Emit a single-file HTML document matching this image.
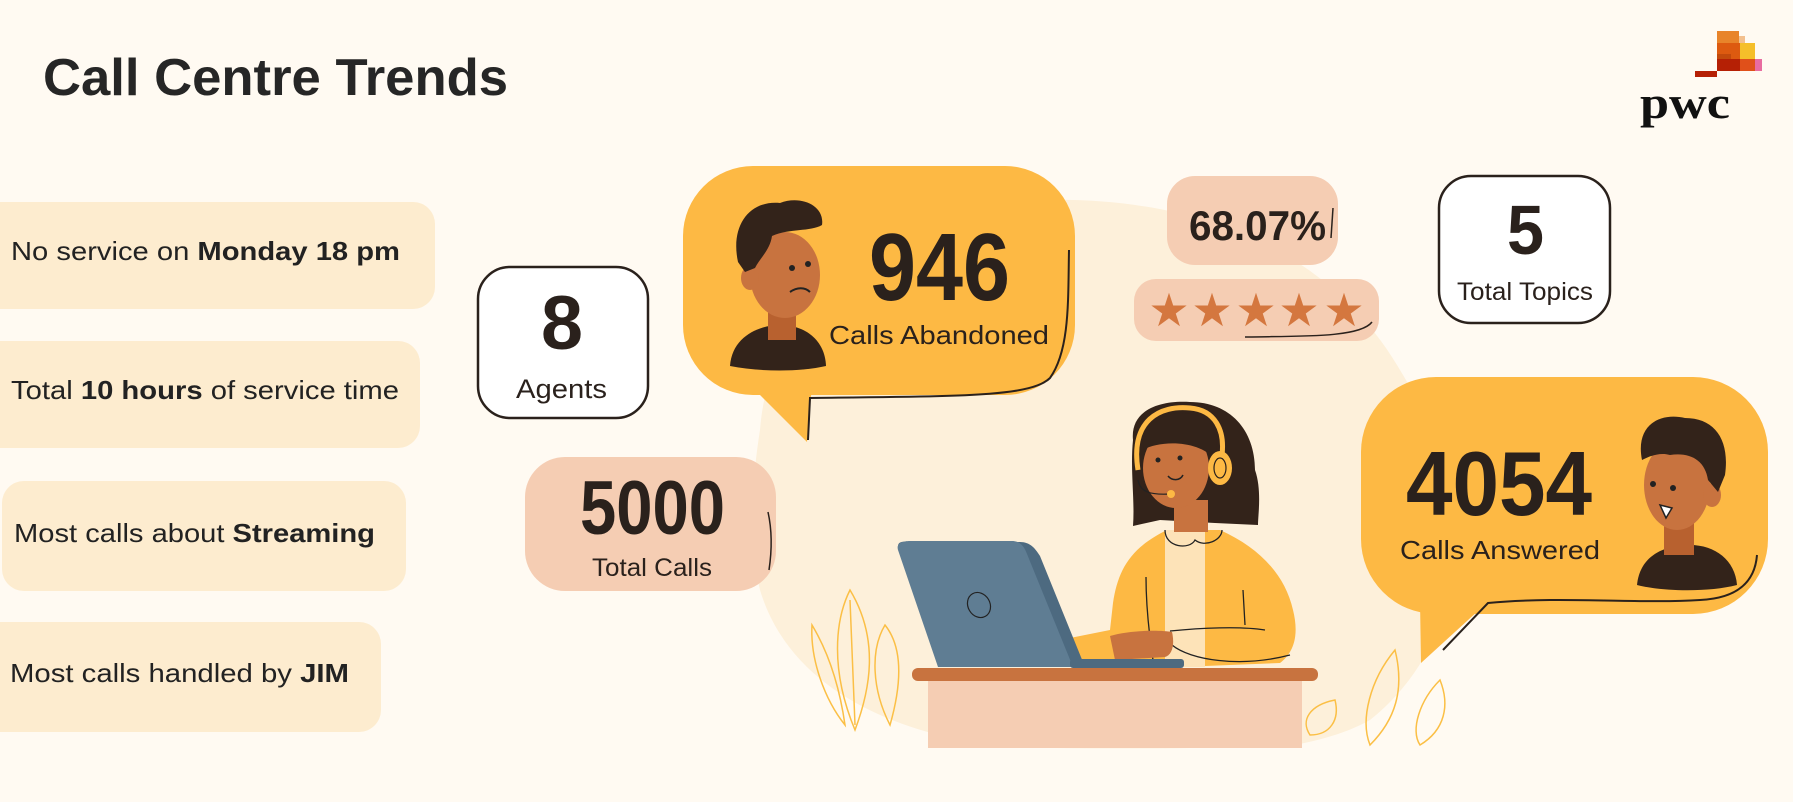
<!DOCTYPE html>
<html><head><meta charset="utf-8"><style>
html,body{margin:0;padding:0;background:#fffaf2;}
svg{display:block;font-family:"Liberation Sans",Arial,sans-serif;}
</style></head><body>
<svg width="1793" height="802" viewBox="0 0 1793 802" xmlns="http://www.w3.org/2000/svg">
<rect width="1793" height="802" fill="#fffaf2"/>
<text x="43" y="95" font-size="52" font-weight="bold" fill="#262626" textLength="465" lengthAdjust="spacingAndGlyphs">Call Centre Trends</text>
<rect x="1717" y="31" width="22" height="12" fill="#e8842a"/>
<rect x="1739" y="36" width="6" height="10" fill="#f3c08e"/>
<rect x="1717" y="43" width="28" height="16" fill="#dd5a10"/>
<rect x="1740" y="43" width="15" height="16" fill="#f5bf2a"/>
<rect x="1717" y="54" width="14" height="6" fill="#c34a0c"/>
<rect x="1717" y="59" width="25" height="12" fill="#b52005"/>
<rect x="1740" y="59" width="15" height="12" fill="#e0501a"/>
<rect x="1755" y="59" width="7" height="12" fill="#e86ca0"/>
<rect x="1695" y="71" width="22" height="6" fill="#b52005"/>
<text x="1640" y="118" font-family="Liberation Serif,serif" font-weight="bold" font-size="46" fill="#111" textLength="90" lengthAdjust="spacingAndGlyphs">pwc</text>

<rect x="-30" y="202" width="465" height="107" rx="22" fill="#fdeccf"/>
<rect x="-30" y="341" width="450" height="107" rx="22" fill="#fdeccf"/>
<rect x="2" y="481" width="404" height="110" rx="22" fill="#fdeccf"/>
<rect x="-30" y="622" width="411" height="110" rx="22" fill="#fdeccf"/>
<g font-size="26" fill="#222">
<text x="11" y="260" textLength="389" lengthAdjust="spacingAndGlyphs">No service on <tspan font-weight="bold">Monday 18 pm</tspan></text>
<text x="11" y="399" textLength="388" lengthAdjust="spacingAndGlyphs">Total <tspan font-weight="bold">10 hours</tspan> of service time</text>
<text x="14" y="542" textLength="361" lengthAdjust="spacingAndGlyphs">Most calls about <tspan font-weight="bold">Streaming</tspan></text>
<text x="10" y="682" textLength="339" lengthAdjust="spacingAndGlyphs">Most calls handled by <tspan font-weight="bold">JIM</tspan></text>
</g>

<path d="M760,430 C770,300 880,205 1040,200 C1200,196 1330,250 1400,370 C1480,500 1470,640 1370,720 C1300,760 1150,760 1060,752 C900,745 790,690 760,590 C748,540 752,480 760,430 Z" fill="#fdf0da"/>
<path d="M800,735 C900,748 1100,752 1330,745 L1340,802 L780,802 Z" fill="#fffaf2"/>

<g fill="none" stroke="#fbbf45" stroke-width="1.5">
<path d="M850,590 C835,620 830,670 855,730 C870,690 880,640 850,590 Z M850,600 L855,725"/>
<path d="M885,625 C870,650 872,690 890,725 C900,690 905,650 885,625 Z"/>
<path d="M812,625 C810,660 825,700 845,725 C840,690 830,655 812,625 Z"/>
<path d="M1395,650 C1370,680 1360,720 1370,745 C1395,720 1405,690 1395,650 Z"/>
<path d="M1440,680 C1420,700 1410,730 1420,745 C1445,730 1450,705 1440,680 Z"/>
<path d="M1335,700 C1310,705 1300,720 1310,735 C1330,735 1340,720 1335,700 Z"/>
</g>

<rect x="478" y="267" width="170" height="151" rx="32" fill="#fff" stroke="#2a211c" stroke-width="2.5"/>
<text x="541" y="349" font-size="76" font-weight="bold" fill="#2a211c" textLength="42" lengthAdjust="spacingAndGlyphs">8</text>
<text x="516" y="398" font-size="27" fill="#2a211c" textLength="91" lengthAdjust="spacingAndGlyphs">Agents</text>

<path d="M750,385 L812,385 L807,442 Z" fill="#fdb944"/>
<rect x="683" y="166" width="392" height="229" rx="70" fill="#fdb944"/>
<path d="M1069,250 C1068,300 1070,350 1050,378 C1030,398 950,396 810,398 L808,440" fill="none" stroke="#2a211c" stroke-width="2"/>
<text x="869" y="300" font-size="96" font-weight="bold" fill="#2a211c" textLength="141" lengthAdjust="spacingAndGlyphs">946</text>
<text x="829" y="344" font-size="26" fill="#2a211c" textLength="220" lengthAdjust="spacingAndGlyphs">Calls Abandoned</text>
<path d="M730,366 C732,336 760,325 780,325 C805,325 825,340 826,366 C800,372 760,372 730,366 Z" fill="#33231a"/>
<rect x="768" y="310" width="28" height="30" fill="#b8612f"/>
<ellipse cx="785" cy="275" rx="35" ry="43" fill="#c8733f"/>
<ellipse cx="750" cy="278" rx="9" ry="12" fill="#c8733f"/>
<path d="M738,262 C730,225 750,200 780,203 C800,195 825,205 822,225 C810,232 790,228 772,236 C770,250 760,258 755,268 L745,272 Z" fill="#33231a"/>
<circle cx="792" cy="268" r="3" fill="#222"/><circle cx="808" cy="264" r="3" fill="#222"/>
<path d="M790,292 C797,287 805,287 810,292" fill="none" stroke="#222" stroke-width="2"/>

<rect x="1167" y="176" width="171" height="89" rx="28" fill="#f5cdb3"/>
<text x="1189" y="240" font-size="42" font-weight="bold" fill="#2a211c" textLength="137" lengthAdjust="spacingAndGlyphs">68.07%</text>
<path d="M1333,208 L1331,238" stroke="#2a211c" stroke-width="1.5"/>
<rect x="1134" y="279" width="245" height="62" rx="22" fill="#f5cdb3"/>
<g fill="#d4773f" font-size="46" text-anchor="middle">
<text x="1169" y="326">★</text><text x="1212" y="326">★</text><text x="1256" y="326">★</text><text x="1299" y="326">★</text><text x="1344" y="326">★</text>
</g>
<path d="M1245,337 C1300,336 1360,338 1372,322" fill="none" stroke="#2a211c" stroke-width="1.5"/>

<rect x="1439" y="176" width="171" height="147" rx="32" fill="#fff" stroke="#2a211c" stroke-width="2.5"/>
<text x="1507" y="254" font-size="70" font-weight="bold" fill="#2a211c" textLength="37" lengthAdjust="spacingAndGlyphs">5</text>
<text x="1457" y="300" font-size="25" fill="#2a211c" textLength="136" lengthAdjust="spacingAndGlyphs">Total Topics</text>

<rect x="525" y="457" width="251" height="134" rx="40" fill="#f5cdb3"/>
<text x="580" y="534" font-size="76" font-weight="bold" fill="#2a211c" textLength="145" lengthAdjust="spacingAndGlyphs">5000</text>
<text x="592" y="576" font-size="25" fill="#2a211c" textLength="120" lengthAdjust="spacingAndGlyphs">Total Calls</text>
<path d="M768,512 C772,530 772,550 769,570" fill="none" stroke="#2a211c" stroke-width="1.5"/>

<path d="M1420,600 L1490,600 L1421,663 Z" fill="#fdb944"/>
<rect x="1361" y="377" width="407" height="237" rx="75" fill="#fdb944"/>
<path d="M1757,555 C1755,580 1740,598 1700,600 C1640,604 1560,596 1488,603 L1443,650" fill="none" stroke="#2a211c" stroke-width="2"/>
<text x="1406" y="515" font-size="91" font-weight="bold" fill="#2a211c" textLength="186" lengthAdjust="spacingAndGlyphs">4054</text>
<text x="1400" y="559" font-size="26" fill="#2a211c" textLength="200" lengthAdjust="spacingAndGlyphs">Calls Answered</text>
<path d="M1637,585 C1640,555 1665,545 1690,545 C1715,545 1735,560 1737,585 C1710,592 1665,592 1637,585 Z" fill="#33231a"/>
<rect x="1664" y="520" width="30" height="35" fill="#b8612f"/>
<ellipse cx="1677" cy="485" rx="33" ry="45" fill="#c8733f"/>
<ellipse cx="1712" cy="495" rx="9" ry="12" fill="#c8733f"/>
<path d="M1642,460 C1635,425 1660,412 1685,418 C1715,418 1730,440 1725,475 L1718,492 L1708,480 C1705,460 1690,452 1670,455 C1660,452 1650,456 1642,460 Z" fill="#33231a"/>
<circle cx="1653" cy="484" r="3" fill="#222"/><circle cx="1673" cy="488" r="3" fill="#222"/>
<path d="M1660,505 L1672,508 L1666,518 Z" fill="#fff" stroke="#222" stroke-width="1.5"/>

<path d="M1133,440 C1130,410 1160,400 1190,402 C1230,402 1255,430 1255,470 C1262,490 1258,515 1258,525 L1215,523 L1160,520 L1133,526 C1135,500 1130,470 1133,440 Z" fill="#33231a"/>
<path d="M1113,603 C1118,570 1130,548 1167,530 L1220,530 C1260,548 1285,575 1293,610 C1298,630 1297,650 1280,663 L1180,667 L1073,667 L1070,638 L1110,630 Z" fill="#fdb944"/>
<rect x="1165" y="530" width="40" height="137" fill="#fde3b8"/>
<rect x="1174" y="500" width="34" height="32" fill="#c8733f"/>
<ellipse cx="1176" cy="468" rx="33" ry="40" fill="#c8733f"/>
<path d="M1143,450 C1145,420 1170,408 1195,415 C1215,420 1220,440 1215,460 C1200,440 1160,440 1143,450 Z" fill="#33231a"/>
<path d="M1138,470 C1130,420 1160,405 1190,408 C1215,410 1225,430 1222,455" fill="none" stroke="#fdb944" stroke-width="5"/>
<ellipse cx="1220" cy="468" rx="12" ry="17" fill="#fdb944"/>
<ellipse cx="1220" cy="468" rx="6" ry="10" fill="none" stroke="#2a211c" stroke-width="1.2"/>
<path d="M1138,480 C1140,492 1150,495 1170,494" fill="none" stroke="#222" stroke-width="1.2"/>
<circle cx="1171" cy="494" r="4" fill="#fdb944"/>
<circle cx="1158" cy="460" r="2.5" fill="#222"/><circle cx="1180" cy="458" r="2.5" fill="#222"/>
<path d="M1168,476 C1172,481 1180,481 1183,475" fill="none" stroke="#222" stroke-width="1.5"/>
<path d="M1165,530 C1165,548 1190,550 1195,540 C1205,548 1222,540 1222,530" fill="none" stroke="#222" stroke-width="1.3"/>
<path d="M1146,577 C1146,610 1150,640 1153,660 M1243,590 L1245,625 M1170,631 C1200,628 1240,626 1265,630 M1172,645 C1190,660 1240,668 1290,655" fill="none" stroke="#222" stroke-width="1.3"/>
<path d="M1110,636 C1130,630 1160,630 1172,632 C1175,645 1172,655 1165,657 L1115,660 Z" fill="#c8733f"/>
<path d="M898,548 C897,540 905,542 910,542 L1020,542 C1030,542 1035,548 1040,556 L1085,667 L1050,667 Z" fill="#4d6a80"/>
<path d="M898,550 C896,543 903,541 910,541 L1012,541 C1020,541 1024,546 1027,554 L1073,667 L938,667 Z" fill="#5f7d93"/>
<ellipse cx="979" cy="605" rx="11" ry="13" fill="none" stroke="#222" stroke-width="1.2" transform="rotate(-30 979 605)"/>
<rect x="1070" y="659" width="114" height="9" rx="3" fill="#4d6a80"/>
<rect x="928" y="680" width="374" height="68" fill="#f5cdb3"/>
<rect x="912" y="668" width="406" height="13" rx="6" fill="#c8733f"/>
</svg>
</body></html>
